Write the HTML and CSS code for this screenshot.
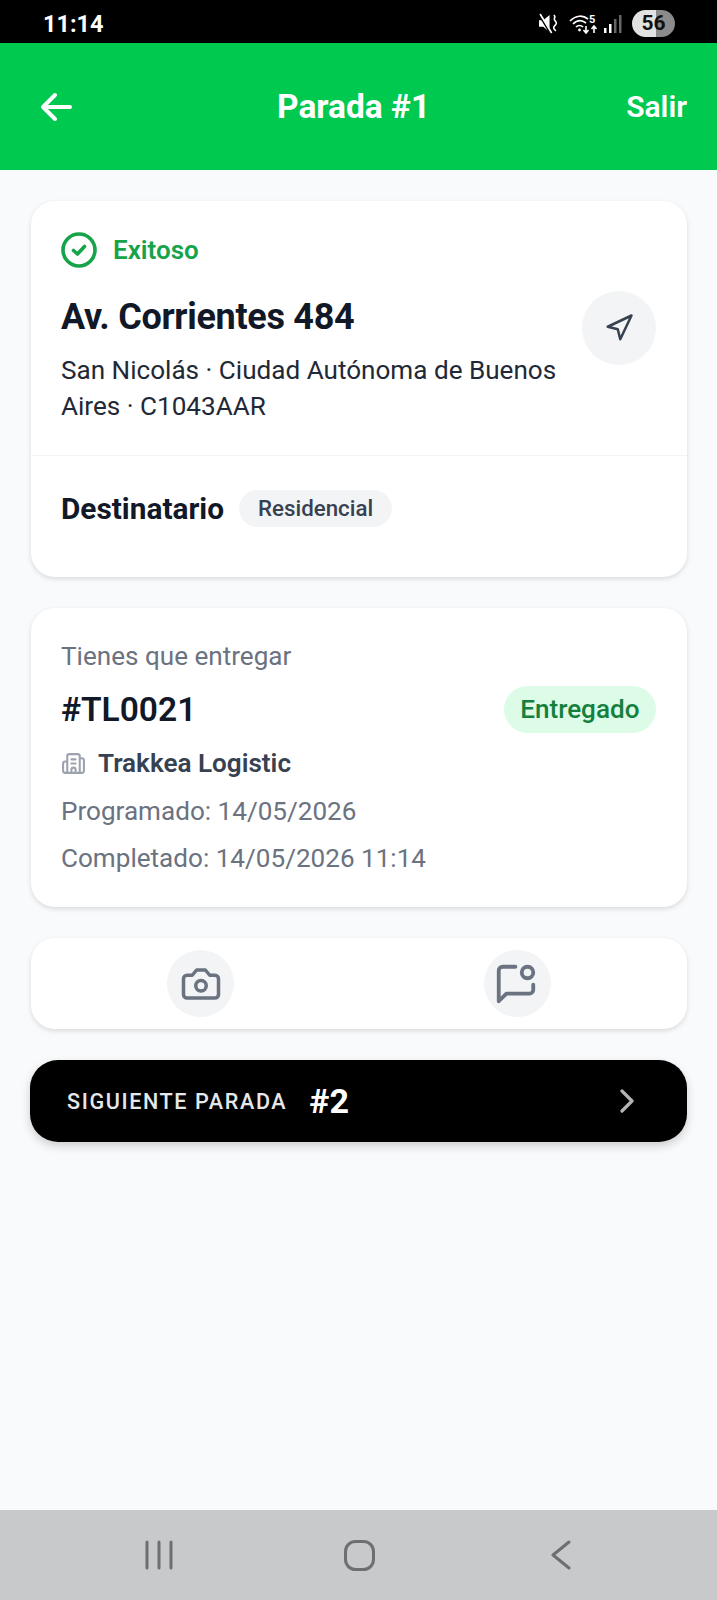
FILE: index.html
```html
<!DOCTYPE html>
<html lang="es">
<head>
  <meta charset="UTF-8" />
  <meta name="viewport" content="width=device-width, initial-scale=1.0" />
  <title>Parada #1</title>
  <link rel="stylesheet" href="styles.css">
</head>
<body>

  <div class="statusbar">
    <span class="hora">11:14</span>
    <div class="status-iconos">
      <svg class="ico-mute" viewBox="0 0 20 20" width="21" height="21">
        <path d="M1 7h4l6-5v16l-6-5H1z" fill="#fff"/>
        <path d="M1 1l11 18" stroke="#000" stroke-width="2.5"/>
        <path d="M2 1l11 18" stroke="#fff" stroke-width="1.6"/>
        <path d="M15 2c3 2-1 3 1 5s2 3 0 5-1 3 1 5" fill="none" stroke="#fff" stroke-width="1.5"/>
      </svg>
      <svg class="ico-wifi" viewBox="0 0 31 20" width="31" height="20">
        <path d="M1 7c6-6 13-6 18-2M4 10c4-4 9-4 13-1M7 13c2-2 5-2 7 0" fill="none" stroke="#fff" stroke-width="1.7"/>
        <circle cx="10.500" cy="16" r="1.400" fill="#fff"/>
        <path d="M17 12v6M14.500 16l2.500 3 2.500-3M25 19v-6M22.500 15l2.500-3 2.500 3" fill="none" stroke="#fff" stroke-width="1.600"/>
        <text x="20" y="9" class="wifi-cinco">5</text>
      </svg>
      <svg class="ico-senal" viewBox="0 0 19 20" width="19" height="20">
        <rect x="0" y="14" width="2.500" height="5" fill="#fff"/>
        <rect x="5" y="10" width="2.500" height="9" fill="#fff"/>
        <rect x="10" y="5" width="2.500" height="14" fill="#666"/>
        <rect x="15" y="1" width="2.500" height="18" fill="#666"/>
      </svg>
      <span class="bateria">56</span>
    </div>
  </div>

  <header class="topbar">
    <a class="volver">
      <svg viewBox="0 0 32 30" width="32" height="30" fill="none" stroke="#fff" stroke-width="4" stroke-linecap="round" stroke-linejoin="round">
        <path d="M15 3L3 15l12 12M3 15h27"/>
      </svg>
    </a>
    <h1>Parada #1</h1>
    <a class="salir">Salir</a>
  </header>

  <main>
    <section class="card">
      <div class="card-top">
        <div class="estado">
          <svg viewBox="0 0 36 36" width="36" height="36" fill="none" stroke="#16a34a" stroke-width="3.600" stroke-linecap="round" stroke-linejoin="round">
            <circle cx="18" cy="18" r="16"/>
            <path d="M12.500 18.500l4 3.500 7-7.500"/>
          </svg>
          <span>Exitoso</span>
        </div>
        <div class="direccion">
          <div class="direccion-txt">
            <h2>Av. Corrientes 484</h2>
            <p>San Nicolás · Ciudad Autónoma de Buenos Aires · C1043AAR</p>
          </div>
          <button class="btn-nav">
            <svg viewBox="0 0 24 24" width="30" height="30" fill="none" stroke="#374151" stroke-width="2" stroke-linecap="round" stroke-linejoin="round">
              <polygon points="3 11 22 2 13 21 11 13 3 11"/>
            </svg>
          </button>
        </div>
      </div>
      <div class="card-bottom">
        <span class="destinatario">Destinatario</span>
        <span class="chip">Residencial</span>
      </div>
    </section>

    <section class="card pedido">
      <div class="pedido-label">Tienes que entregar</div>
      <div class="pedido-fila">
        <span class="pedido-id">#TL0021</span>
        <span class="badge">Entregado</span>
      </div>
      <div class="empresa">
        <svg viewBox="0 0 24 24" width="25" height="25" fill="none" stroke="#9ca3af" stroke-width="2" stroke-linecap="round" stroke-linejoin="round">
          <path d="M10 12h4M10 8h4M14 21v-3a2 2 0 0 0-4 0v3M6 10H4a2 2 0 0 0-2 2v7a2 2 0 0 0 2 2h16a2 2 0 0 0 2-2V9a2 2 0 0 0-2-2h-2M6 21V5a2 2 0 0 1 2-2h8a2 2 0 0 1 2 2v16"/>
        </svg>
        <span>Trakkea Logistic</span>
      </div>
      <div class="fecha">Programado: 14/05/2026</div>
      <div class="fecha">Completado: 14/05/2026 11:14</div>
    </section>

    <section class="card acciones">
      <button class="btn-accion">
        <svg viewBox="0 0 24 24" width="42" height="42" fill="none" stroke="#6b7280" stroke-width="2" stroke-linecap="round" stroke-linejoin="round">
          <path d="M14.500 4h-5L7 7H4a2 2 0 0 0-2 2v9a2 2 0 0 0 2 2h16a2 2 0 0 0 2-2V9a2 2 0 0 0-2-2h-3l-2.500-3z"/>
          <circle cx="12" cy="13" r="3"/>
        </svg>
      </button>
      <button class="btn-accion">
        <svg class="ico-mensaje" viewBox="0 0 24 24" width="46" height="46" fill="none" stroke="#6b7280" stroke-width="2" stroke-linecap="round" stroke-linejoin="round">
          <path d="M11.700 3H5a2 2 0 0 0-2 2v16l4-4h12a2 2 0 0 0 2-2v-2.700"/>
          <circle cx="18" cy="6" r="3"/>
        </svg>
      </button>
    </section>

    <button class="siguiente">
      <span class="siguiente-txt">SIGUIENTE PARADA</span>
      <span class="siguiente-num">#2</span>
      <svg viewBox="0 0 16 24" width="16" height="24" fill="none" stroke="#b4b4b4" stroke-width="3.200" stroke-linecap="round" stroke-linejoin="round">
        <path d="M3 2l10 10L3 22"/>
      </svg>
    </button>
  </main>

  <nav class="navbar">
    <svg viewBox="0 0 28 30" width="28" height="30" fill="none" stroke="#6f6f6f" stroke-width="3" stroke-linecap="round">
      <path d="M2 2v26M14 2v26M26 2v26"/>
    </svg>
    <svg class="nav-home" viewBox="0 0 31 31" width="31" height="31" fill="none" stroke="#6f6f6f" stroke-width="3">
      <rect x="1.500" y="1.500" width="28" height="28" rx="10"/>
    </svg>
    <svg viewBox="0 0 20 30" width="20" height="30" fill="none" stroke="#6f6f6f" stroke-width="3" stroke-linecap="round" stroke-linejoin="round">
      <path d="M18 2L2 15l16 13"/>
    </svg>
  </nav>

</body>
</html>
```

FILE: styles.css
```css
* { box-sizing: border-box; }
body {
  margin: 0;
  width: 717px;
  height: 1600px;
  display: flex;
  flex-direction: column;
  font-family: 'Roboto', sans-serif;
  background-color: #f9fafb;
  color: #111827;
}
h1, h2, p { margin: 0; }
button { border: none; padding: 0; font-family: inherit; }

.statusbar { height: 43px; background: #000; color: #fff; display: flex; align-items: center; justify-content: space-between; padding: 4px 42px 0 43px; }
.hora { font-size: 23.500px; font-weight: 700; }
.status-iconos { display: flex; align-items: center; }
.ico-mute { margin-right: 10px; }
.ico-senal { margin-left: 4px; margin-right: 9px; }
.wifi-cinco { font-family: 'Roboto', sans-serif; font-size: 11px; font-weight: 700; fill: #fff; }
.bateria { width: 43px; height: 27px; border-radius: 14px; background: linear-gradient(90deg, #e2e2e2 55%, #8b8b8b 55%); color: #111; font-size: 21px; font-weight: 700; text-align: center; line-height: 27px; }

.topbar { height: 127px; background: #00c950; color: #fff; display: flex; align-items: center; padding: 0 30px 0 40px; }
.volver { width: 41px; display: flex; }
.topbar h1 { flex: 1; text-align: center; font-size: 33.500px; font-weight: 700; }
.salir { font-size: 30px; font-weight: 600; }

main { flex: 1; padding: 31px 30px 0 31px; display: flex; flex-direction: column; gap: 31px; }
.card { background: #fff; border-radius: 24px; box-shadow: 0 2px 5px rgba(0,0,0,0.13); }

.card-top { padding: 31px 31px 31px 30px; border-bottom: 1px solid #f3f4f6; }
.estado { display: flex; align-items: center; gap: 16px; font-size: 26px; font-weight: 600; color: #16a34a; }
.direccion { display: flex; justify-content: space-between; align-items: flex-start; margin-top: 23px; }
.direccion-txt { width: 510px; padding-top: 4px; }
.direccion h2 { font-size: 36px; font-weight: 700; line-height: 44px; letter-spacing: -0.3px; }
.direccion p { font-size: 26.100px; line-height: 35.500px; color: #1f2937; margin-top: 14px; }
.btn-nav { width: 74px; height: 74px; border-radius: 50%; background: #f3f4f6; display: flex; align-items: center; justify-content: center; }

.card-bottom { display: flex; align-items: center; gap: 15px; height: 121px; padding: 0 30px 17px; }
.destinatario { font-size: 29.800px; font-weight: 700; }
.chip { background: #f3f4f6; color: #374151; border-radius: 19px; height: 37px; line-height: 37px; margin-top: 1px; padding: 0 19px; font-size: 22.300px; font-weight: 500; }

.pedido { padding: 32px 31px 33px 30px; }
.pedido-label { font-size: 26.100px; line-height: 32px; color: #6b7280; }
.pedido-fila { display: flex; justify-content: space-between; align-items: center; margin-top: 14px; }
.pedido-id { font-size: 33.500px; font-weight: 600; }
.badge { background: #dcfce7; color: #15803d; border-radius: 24px; height: 47px; line-height: 47px; padding: 0 16.500px; font-size: 26.100px; font-weight: 500; }
.empresa { display: flex; align-items: center; gap: 12px; margin-top: 15px; padding-bottom: 2px; font-size: 26.100px; font-weight: 600; color: #374151; }
.fecha { font-size: 26.100px; line-height: 32px; color: #6b7280; margin-top: 15px; }

.acciones { display: grid; grid-template-columns: 1fr 1fr; justify-items: center; padding: 12px 11px; }
.btn-accion { width: 67px; height: 67px; border-radius: 50%; background: #f3f4f6; display: flex; align-items: center; justify-content: center; }
.ico-mensaje { margin-right: 3px; }

.siguiente { height: 82px; margin-left: -1px; border-radius: 28px; background: #000; box-shadow: 0 4px 10px rgba(0,0,0,0.18); display: flex; align-items: center; padding: 0 52px 0 37px; }
.siguiente-txt { font-size: 21.600px; font-weight: 500; letter-spacing: 1.600px; color: #e5e7eb; }
.siguiente-num { flex: 1; text-align: left; margin-left: 22px; font-size: 34px; font-weight: 700; color: #fff; }

.navbar { height: 90px; background: #c8c9ca; display: flex; align-items: center; padding: 0 0 0 145px; }
.nav-home { margin: 0 176px 0 171px; }
```
